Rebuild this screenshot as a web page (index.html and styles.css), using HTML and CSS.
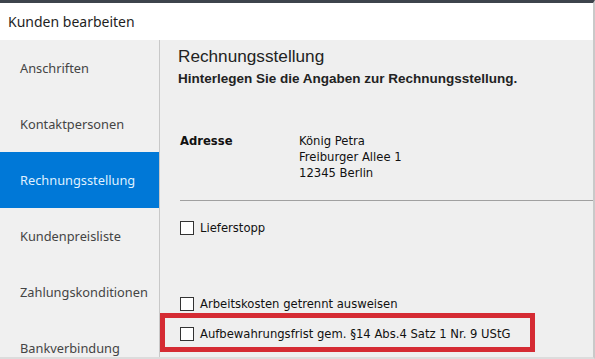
FILE: index.html
```html
<!DOCTYPE html>
<html lang="de">
<head>
    <meta charset="UTF-8">
    <title>Kunden bearbeiten</title>
    <link rel="stylesheet" href="styles.css">
</head>
<body>
    <div class="dialog">
        <div class="dialog-header">Kunden bearbeiten</div>

        <div class="dialog-body">
            <nav class="side-nav">
                <div class="nav-item">Anschriften</div>
                <div class="nav-item">Kontaktpersonen</div>
                <div class="nav-item active">Rechnungsstellung</div>
                <div class="nav-item">Kundenpreisliste</div>
                <div class="nav-item">Zahlungskonditionen</div>
                <div class="nav-item">Bankverbindung</div>
            </nav>

            <main class="panel">
                <h1 class="panel-title">Rechnungsstellung</h1>
                <p class="panel-subtitle">Hinterlegen Sie die Angaben zur Rechnungsstellung.</p>

                <div class="address-row">
                    <div class="field-label">Adresse</div>
                    <div class="address">
                        <div>König Petra</div>
                        <div>Freiburger Allee 1</div>
                        <div>12345 Berlin</div>
                    </div>
                </div>

                <hr class="divider">

                <label class="check check-first"><span class="box"></span>Lieferstopp</label>
                <label class="check check-spaced"><span class="box"></span>Arbeitskosten getrennt ausweisen</label>
                <label class="check check-marked"><span class="box"></span>Aufbewahrungsfrist gem. §14 Abs.4 Satz 1 Nr. 9 UStG</label>

                <!-- highlight frame from the screenshot annotation -->
                <div class="highlight"></div>
            </main>
        </div>
    </div>
</body>
</html>
```

FILE: styles.css
```css
* {
    margin: 0;
    padding: 0;
    box-sizing: border-box;
}

body {
    width: 595px;
    height: 359px;
    overflow: hidden;
    background: #efefef;
    font-family: 'Noto Sans', 'Open Sans', sans-serif;
}

.dialog {
    height: 359px;
    border-top: 3px solid #3d444c;
    border-right: 2px solid #c9c9c9;
    border-bottom: 2px solid #dcdcdc;
    display: flex;
    flex-direction: column;
}

.dialog-header {
    height: 37px;
    background: #ffffff;
    padding-left: 8px;
    font-size: 14px;
    line-height: 37px;
    color: #1e1e1e;
}

.dialog-body {
    flex: 1;
    display: flex;
    min-height: 0;
}

/* Left navigation */
.side-nav {
    width: 160px;
    border-right: 1px solid #c8c8c8;
    background: #f0f0f0;
    display: flex;
    flex-direction: column;
}

.nav-item {
    height: 56px;
    flex-shrink: 0;
    padding-left: 20px;
    display: flex;
    align-items: center;
    font-size: 12.8px;
    color: #444;
}

.nav-item.active {
    background: #0078d7;
    color: #dff0ff;
}

/* Content panel */
.panel {
    flex: 1;
    position: relative;
    padding: 6px 0 0 18px;
    font-family: 'DejaVu Sans', Verdana, sans-serif;
    font-size: 11.6px;
    color: #111;
}

.panel-title {
    font-family: 'Liberation Sans', Arial, sans-serif;
    font-size: 17.2px;
    font-weight: normal;
    line-height: 20px;
    color: #222;
}

.panel-subtitle {
    margin-top: 4px;
    font-family: 'Liberation Sans', Arial, sans-serif;
    font-size: 13.5px;
    font-weight: bold;
    line-height: 18px;
    color: #222;
}

.address-row {
    display: flex;
    margin-top: 45px;
    padding-left: 2px;
    line-height: 16px;
}

.field-label {
    width: 119px;
    font-weight: bold;
}

.divider {
    border: none;
    border-top: 1px solid #a0a0a0;
    margin: 19px 0 0 2px;
}

.check {
    display: flex;
    align-items: center;
    gap: 6px;
    padding-left: 2px;
    line-height: 16px;
}

.box {
    width: 14px;
    height: 14px;
    border: 1px solid #333;
    background: #fff;
}

.check-first {
    margin-top: 19px;
}

.check-spaced {
    margin-top: 60px;
}

.check-marked {
    margin-top: 14px;
}

.highlight {
    position: absolute;
    left: 0;
    top: 273px;
    width: 375px;
    height: 39px;
    border: 5px solid #d52b33;
}
```
